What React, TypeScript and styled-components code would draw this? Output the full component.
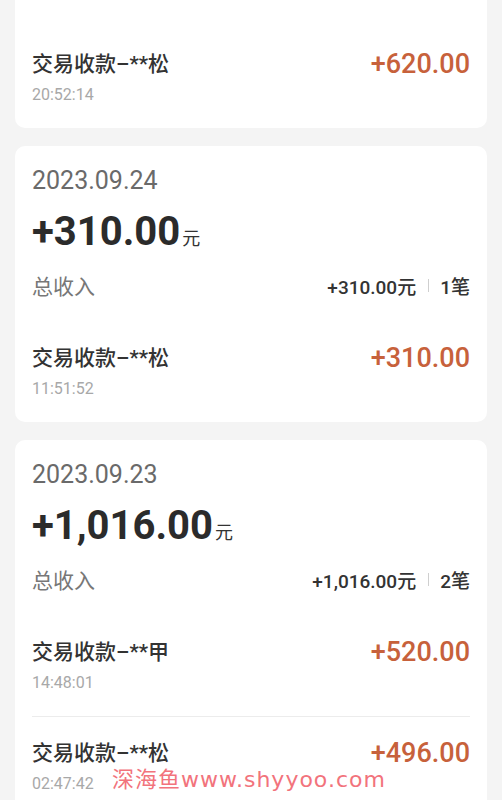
import React from "react";
import styled, { createGlobalStyle } from "styled-components";

const GlobalStyle = createGlobalStyle`
  * {
    box-sizing: border-box;
  }
  html,
  body {
    margin: 0;
    padding: 0;
    background: #f4f4f4;
    font-family: Roboto, "Noto Sans CJK SC", sans-serif;
  }
`;

const Page = styled.div`
  position: relative;
  width: 502px;
  height: 800px;
  overflow: hidden;
  background: #f4f4f4;
  padding: 0 15px;
  display: flex;
  flex-direction: column;
  gap: 18px;
`;

const Card = styled.div<{ $cut?: boolean }>`
  background: #ffffff;
  border-radius: ${({ $cut }) => ($cut ? "0 0 10px 10px" : "10px")};
  padding: ${({ $cut }) => ($cut ? "28px 17px 0" : "0 17px")};
`;

const Header = styled.div`
  padding: 20px 0 24px;
  display: flex;
  flex-direction: column;
`;

const DateText = styled.div`
  font-size: 25px;
  line-height: 30px;
  color: #6a6a6a;
  font-weight: 400;
`;

const Total = styled.div`
  margin-top: 8px;
  height: 56px;
  display: flex;
  align-items: baseline;
  color: #2b2b2b;
  line-height: 56px;
  strong {
    font-size: 40px;
    font-weight: 700;
  }
  span {
    font-size: 18px;
    margin-left: 2px;
    color: #333333;
  }
`;

const Summary = styled.div`
  margin-top: 12px;
  height: 26px;
  display: flex;
  justify-content: space-between;
  align-items: center;
  .label {
    font-size: 21px;
    color: #777777;
  }
  .stats {
    display: flex;
    align-items: center;
    font-size: 19px;
    font-weight: 500;
    color: #333333;
  }
  .sep {
    width: 1px;
    height: 13px;
    background: #cfcfcf;
    margin: 0 11px 0 12px;
  }
`;

const Row = styled.div<{ $divider?: boolean }>`
  padding: 22px 0;
  display: flex;
  justify-content: space-between;
  align-items: flex-start;
  border-top: ${({ $divider }) => ($divider ? "1px solid #ececec" : "none")};
`;

const RowInfo = styled.div`
  display: flex;
  flex-direction: column;
  gap: 6px;
`;

const RowName = styled.div`
  font-size: 21px;
  line-height: 28px;
  font-weight: 500;
  color: #333333;
`;

const RowTime = styled.div`
  font-size: 16px;
  line-height: 22px;
  color: #a8a8a8;
`;

const RowAmount = styled.div`
  font-size: 27px;
  line-height: 28px;
  font-weight: 500;
  color: #c7613b;
`;

const Watermark = styled.div`
  position: absolute;
  left: 112px;
  top: 767px;
  font-family: "DejaVu Sans", "Noto Sans CJK SC", sans-serif;
  font-size: 22px;
  line-height: 26px;
  color: #f2737c;
  letter-spacing: 1px;
  white-space: nowrap;
`;

type Txn = { name: string; time: string; amount: string };

type Day = { date: string; total: string; count: number; items: Txn[] };

const days: Day[] = [
  {
    date: "2023.09.24",
    total: "+310.00",
    count: 1,
    items: [{ name: "交易收款–**松", time: "11:51:52", amount: "+310.00" }],
  },
  {
    date: "2023.09.23",
    total: "+1,016.00",
    count: 2,
    items: [
      { name: "交易收款–**甲", time: "14:48:01", amount: "+520.00" },
      { name: "交易收款–**松", time: "02:47:42", amount: "+496.00" },
    ],
  },
];

const TxnRow = ({ item, divider }: { item: Txn; divider?: boolean }) => (
  <Row $divider={divider}>
    <RowInfo>
      <RowName>{item.name}</RowName>
      <RowTime>{item.time}</RowTime>
    </RowInfo>
    <RowAmount>{item.amount}</RowAmount>
  </Row>
);

const App = () => {
  return (
    <>
      <GlobalStyle />
      <Page>
        <Card $cut>
          <TxnRow item={{ name: "交易收款–**松", time: "20:52:14", amount: "+620.00" }} />
        </Card>
        {days.map((day) => (
          <Card key={day.date}>
            <Header>
              <DateText>{day.date}</DateText>
              <Total>
                <strong>{day.total}</strong>
                <span>元</span>
              </Total>
              <Summary>
                <div className="label">总收入</div>
                <div className="stats">
                  {day.total}元<i className="sep" />
                  {day.count}笔
                </div>
              </Summary>
            </Header>
            {day.items.map((item, i) => (
              <TxnRow key={item.time} item={item} divider={i > 0} />
            ))}
          </Card>
        ))}
        <Watermark>深海鱼www.shyyoo.com</Watermark>
      </Page>
    </>
  );
};

export default App;
